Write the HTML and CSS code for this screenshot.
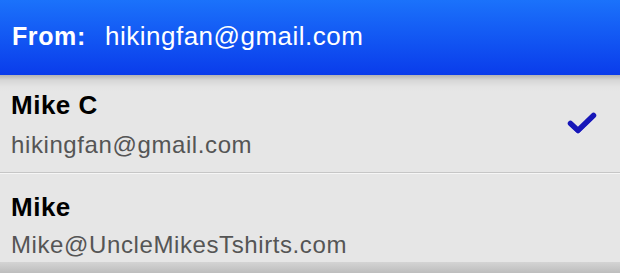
FILE: index.html
```html
<!DOCTYPE html>
<html>
<head>
<meta charset="utf-8">
<link rel="stylesheet" href="styles.css">
</head>
<body>
<div class="screen">
  <div class="header">
    <span class="from-label">From:</span>
    <span class="from-value">hikingfan@gmail.com</span>
  </div>
  <div class="list">
    <div class="row row-first">
      <div class="info">
        <div class="name">Mike C</div>
        <div class="email">hikingfan@gmail.com</div>
      </div>
      <svg class="check" width="32" height="26" viewBox="0 0 32 26">
        <path d="M4.5 12.5 L12 19.5 L27.5 4.5" fill="none" stroke="#ffffff" stroke-opacity="0.6" stroke-width="5.5" stroke-linecap="round" stroke-linejoin="round" transform="translate(0 1)"/>
        <path d="M4.5 12.5 L12 19.5 L27.5 4.5" fill="none" stroke="#1717b8" stroke-width="5.5" stroke-linecap="round" stroke-linejoin="round"/>
      </svg>
    </div>
    <div class="sep"></div>
    <div class="row row-second">
      <div class="info">
        <div class="name">Mike</div>
        <div class="email">Mike@UncleMikesTshirts.com</div>
      </div>
    </div>
    <div class="bottom-band"></div>
  </div>
</div>
</body>
</html>
```

FILE: styles.css
```css
html, body {
  margin: 0;
  padding: 0;
  background: #e6e6e6;
}

.screen {
  width: 620px;
  height: 273px;
  overflow: hidden;
  font-family: "Liberation Sans", Arial, Helvetica, sans-serif;
  display: flex;
  flex-direction: column;
}

.header {
  height: 75px;
  box-sizing: border-box;
  background: linear-gradient(#1b72fb, #0a3ceb);
  display: flex;
  align-items: center;
  padding: 0 0 2px 12px;
  color: #ffffff;
}

.from-label {
  font-size: 25px;
  font-weight: bold;
  letter-spacing: 0.6px;
  width: 93px;
}

.from-value {
  font-size: 26px;
  letter-spacing: 0.5px;
}

.list {
  display: flex;
  flex-direction: column;
  flex: 1;
}

.row {
  display: flex;
  align-items: flex-start;
  justify-content: space-between;
  padding: 0 22px 0 11px;
  background: #e6e6e6;
  box-sizing: border-box;
}

.row-first {
  height: 97px;
  padding-top: 15px;
  background: linear-gradient(#b3b3b3 0px, #d6d6d6 5px, #e4e4e4 12px, #e6e6e6 16px);
}

.row-second {
  height: 88px;
  padding-top: 18px;
}

.info {
  display: flex;
  flex-direction: column;
}

.name {
  font-size: 26px;
  font-weight: bold;
  line-height: 30px;
  letter-spacing: 0.5px;
  color: #000000;
}

.email {
  margin-top: 9px;
  font-size: 24px;
  line-height: 28px;
  letter-spacing: 0.6px;
  color: #555555;
}

.row-first .email {
  margin-top: 11px;
}

.check {
  display: block;
  align-self: center;
  margin-top: -14px;
}

.sep {
  height: 1px;
  background: #c6c6c6;
  border-bottom: 1px solid #f6f6f6;
}

.bottom-band {
  flex: 1;
  background: linear-gradient(#d4d4d4, #bdbdbd);
}
```
